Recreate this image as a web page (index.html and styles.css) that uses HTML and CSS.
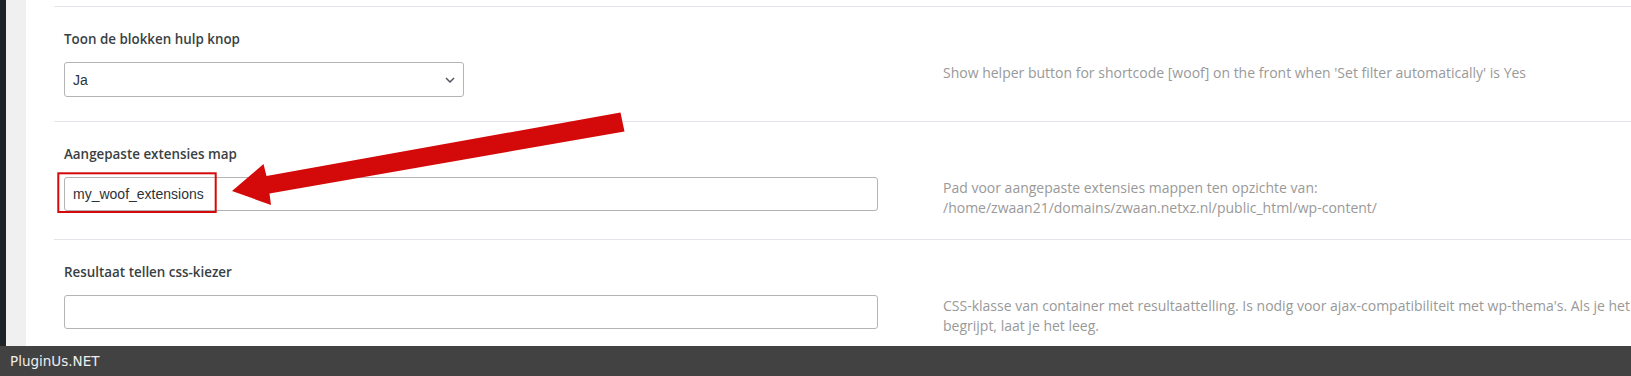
FILE: index.html
```html
<!DOCTYPE html>
<html lang="nl">
<head>
    <meta charset="UTF-8">
    <meta name="viewport" content="width=device-width, initial-scale=1.0">
    <title>WOOF opties</title>
    <link rel="stylesheet" href="styles.css">
</head>
<body>
    <div class="adminmenu"></div>
    <div class="menu-gap"></div>
    <main class="content">
        <div class="option">
            <div class="option-label">Toon de blokken hulp knop</div>
            <div class="option-field">
                <div class="select">
                    <span>Ja</span>
                    <svg width="10" height="6" viewBox="0 0 10 6"><path d="M1 1l4 4 4-4" fill="none" stroke="#50575e" stroke-width="1.5"/></svg>
                </div>
            </div>
            <div class="option-desc">Show helper button for shortcode [woof] on the front when 'Set filter automatically' is Yes</div>
        </div>
        <div class="option">
            <div class="option-label">Aangepaste extensies map</div>
            <div class="option-field">
                <input class="text-input" type="text" value="my_woof_extensions">
            </div>
            <div class="option-desc">Pad voor aangepaste extensies mappen ten opzichte van:<br>/home/zwaan21/domains/zwaan.netxz.nl/public_html/wp-content/</div>
        </div>
        <div class="option">
            <div class="option-label">Resultaat tellen css-kiezer</div>
            <div class="option-field">
                <input class="text-input" type="text" value="">
            </div>
            <div class="option-desc">CSS-klasse van container met resultaattelling. Is nodig voor ajax-compatibiliteit met wp-thema's. Als je het niet begrijpt, laat je het leeg.</div>
        </div>
    </main>
    <footer class="footer">PluginUs.NET</footer>

    <!-- annotation drawn over the screenshot -->
    <svg class="annotation" width="1631" height="376" viewBox="0 0 1631 376">
        <rect x="58.3" y="173.3" width="157.4" height="38.7" fill="none" stroke="#d40a0a" stroke-width="2"/>
        <polygon points="232,191 263.5,164 266.5,176 620.5,112.5 624.5,131.5 269.5,193.5 271,205" fill="#d40a0a"/>
    </svg>
</body>
</html>
```

FILE: styles.css
```css
body {
    margin: 0;
    display: flex;
    height: 376px;
    overflow: hidden;
    background-color: #fff;
    font-family: "Open Sans", "Liberation Sans", sans-serif;
}

.adminmenu {
    width: 6px;
    flex-shrink: 0;
    background-color: #1d2327;
}

.menu-gap {
    width: 20px;
    flex-shrink: 0;
    background-color: #f0f0f1;
}

.content {
    flex: 1;
    padding: 6px 0 0 28px;
    min-width: 0;
}

.option {
    display: grid;
    grid-template-columns: 879px 745px;
    grid-template-areas:
        "label ."
        "field desc";
    padding: 22px 0 21px 10px;
    border-top: 1px solid #e2e6ea;
}

.option-label {
    grid-area: label;
    font-size: 13.4px;
    font-weight: 600;
    line-height: 20px;
    color: #3a3f44;
    margin-bottom: 13px;
}

.option-field {
    grid-area: field;
    margin-bottom: 3px;
}

.option-desc {
    grid-area: desc;
    padding-top: 1px;
    font-size: 14px;
    line-height: 20px;
    color: #999;
}

.select {
    box-sizing: border-box;
    width: 400px;
    height: 35px;
    display: flex;
    align-items: center;
    justify-content: space-between;
    padding: 0 8px;
    border: 1px solid #b4b4b4;
    border-radius: 3px;
    font-family: "Liberation Sans", Arial, sans-serif;
    font-size: 14px;
    color: #2c3338;
}

.text-input {
    box-sizing: border-box;
    display: block;
    width: 814px;
    height: 34px;
    margin: 0;
    padding: 0 8px;
    border: 1px solid #b4b4b4;
    border-radius: 3px;
    font-family: "Liberation Sans", Arial, sans-serif;
    font-size: 14px;
    color: #2c3338;
    background-color: #fff;
    outline: none;
}

.footer {
    position: fixed;
    left: 0;
    right: 0;
    bottom: 0;
    height: 30px;
    padding-left: 10px;
    background-color: #424242;
    color: #eee;
    font-family: "DejaVu Sans", sans-serif;
    font-size: 13.5px;
    line-height: 30px;
}

.annotation {
    position: absolute;
    top: 0;
    left: 0;
    pointer-events: none;
}
```
